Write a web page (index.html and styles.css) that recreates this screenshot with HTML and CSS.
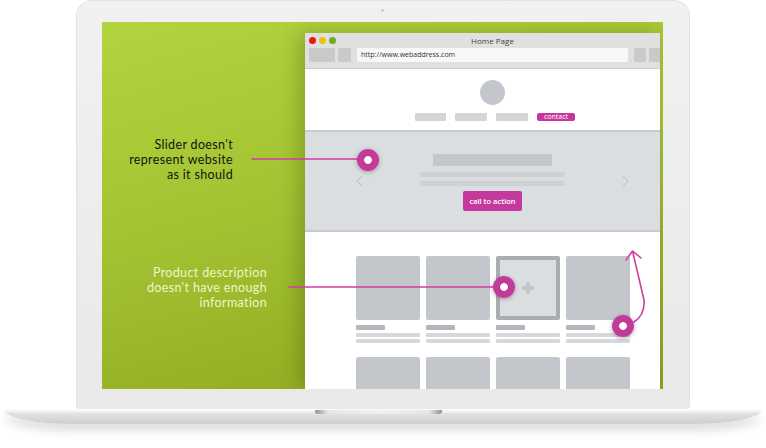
FILE: index.html
```html
<!DOCTYPE html>
<html lang="en">
  <head>
    <meta charset="UTF-8" />
    <meta name="viewport" content="width=device-width, initial-scale=1.0" />
    <title>Website Review</title>
    <link rel="stylesheet" href="styles.css">
  </head>
  <body>
    <div class="laptop">
      <div class="lid">
        <span class="camera"></span>
        <div class="screen">
          <!-- Notes on the left -->
          <div class="notes">
            <p class="note note-dark">Slider doesn't<br>represent website<br>as it should</p>
            <p class="note note-light">Product description<br>doesn't have enough<br>information</p>
          </div>

          <!-- Browser window -->
          <div class="browser">
            <div class="browser-inner">
              <div class="chrome">
                <div class="title-row">
                  <div class="lights">
                    <span class="light red"></span>
                    <span class="light yellow"></span>
                    <span class="light green"></span>
                  </div>
                  <div class="window-title">Home Page</div>
                  <div></div>
                </div>
                <div class="address-row">
                  <span class="btn btn-wide"></span>
                  <span class="btn"></span>
                  <div class="address">http://www.webaddress.com</div>
                  <span class="btn btn-small"></span>
                  <span class="btn btn-small"></span>
                  <span class="btn btn-small"></span>
                </div>
              </div>

              <div class="page">
                <div class="header">
                  <div class="avatar"></div>
                  <div class="nav">
                    <span class="nav-item"></span>
                    <span class="nav-item wide"></span>
                    <span class="nav-item wide"></span>
                    <span class="nav-item contact">contact</span>
                  </div>
                </div>

                <div class="slider">
                  <svg class="chevron" width="7" height="12" viewBox="0 0 7 12"><path d="M6 1 L1 6 L6 11" /></svg>
                  <div class="slide">
                    <span class="slide-title"></span>
                    <span class="slide-line"></span>
                    <span class="slide-line short-gap"></span>
                    <span class="cta">call to action</span>
                  </div>
                  <svg class="chevron" width="7" height="12" viewBox="0 0 7 12"><path d="M1 1 L6 6 L1 11" /></svg>
                </div>

                <div class="products">
                  <div class="product">
                    <div class="thumb"></div>
                    <span class="label"></span>
                    <span class="text-line"></span>
                    <span class="text-line"></span>
                  </div>
                  <div class="product">
                    <div class="thumb"></div>
                    <span class="label"></span>
                    <span class="text-line"></span>
                    <span class="text-line"></span>
                  </div>
                  <div class="product">
                    <div class="thumb thumb-empty">
                      <svg width="14" height="14" viewBox="0 0 14 14"><path d="M7 1 V13 M1 7 H13" /></svg>
                    </div>
                    <span class="label"></span>
                    <span class="text-line"></span>
                    <span class="text-line"></span>
                  </div>
                  <div class="product">
                    <div class="thumb"></div>
                    <span class="label"></span>
                    <span class="text-line"></span>
                    <span class="text-line"></span>
                  </div>
                  <div class="product">
                    <div class="thumb"></div>
                  </div>
                  <div class="product">
                    <div class="thumb"></div>
                  </div>
                  <div class="product">
                    <div class="thumb"></div>
                  </div>
                  <div class="product">
                    <div class="thumb"></div>
                  </div>
                </div>
              </div>
            </div>
          </div>

          <!-- Pointer lines and pins over the screen -->
          <svg class="pointers" width="561" height="367" viewBox="0 0 561 367">
            <path d="M150 137 H266" />
            <path d="M187 265 H402" />
            <path d="M532 300 Q543 293 542 278 L531 231" />
            <path d="M524 238 L530.5 229 L539 236" />
          </svg>
          <span class="pin pin-slider"></span>
          <span class="pin pin-product"></span>
          <span class="pin pin-card"></span>
        </div>
      </div>
      <div class="base">
        <span class="notch"></span>
      </div>
    </div>
  </body>
</html>
```

FILE: styles.css
```css
* {
  box-sizing: border-box;
}
body {
  margin: 0;
  padding: 0;
  background: #fff;
  font-family: "Open Sans", "Liberation Sans", sans-serif;
  width: 766px;
  height: 448px;
  overflow: hidden;
}
.laptop {
  width: 766px;
}

/* Lid */
.lid {
  width: 614px;
  height: 409px;
  margin-left: 76px;
  padding: 8px 26px 19px 25px;
  background: linear-gradient(#f1f1f1, #e9e9e9);
  border: 1px solid #e2e2e2;
  border-bottom: none;
  border-radius: 16px 16px 4px 4px;
  display: flex;
  flex-direction: column;
}
.camera {
  display: block;
  width: 3px;
  height: 3px;
  margin: 0 auto 10px;
  border-radius: 50%;
  background: #cacaca;
}
.screen {
  position: relative;
  width: 561px;
  height: 367px;
  padding: 11px 3px 0 0;
  display: flex;
  align-items: flex-start;
  overflow: hidden;
  background: linear-gradient(165deg, #b2d43f 0%, #a3c232 45%, #8aa51c 100%);
}

/* Notes */
.notes {
  width: 203px;
  flex: none;
  padding-top: 104px;
}
.note {
  margin: 0;
  font-family: Lato, "Open Sans", sans-serif;
  font-size: 12.5px;
  line-height: 15px;
  letter-spacing: 0.35px;
  text-align: right;
}
.note-dark {
  color: #141414;
  margin-right: 72px;
}
.note-light {
  color: #eef6c6;
  margin-top: 83px;
  margin-right: 38px;
}

/* Browser */
.browser {
  width: 355px;
  height: 356px;
  flex: none;
  overflow: hidden;
  box-shadow: -6px 0 18px rgba(50, 60, 0, 0.28);
}
.browser-inner {
  width: 375px;
  height: 100%;
  background: #fff;
}
.chrome {
  background: #e0e0e0;
  padding: 4px 4px 6px;
  border-bottom: 1px solid #cbcbcb;
}
.title-row {
  display: grid;
  grid-template-columns: 1fr auto 1fr;
  align-items: center;
  height: 7px;
  margin-bottom: 4px;
}
.lights {
  display: flex;
  gap: 3px;
}
.light {
  width: 7px;
  height: 7px;
  border-radius: 50%;
}
.red { background: #ef1616; }
.yellow { background: #e6c30c; }
.green { background: #6fae22; }
.window-title {
  font-size: 8px;
  line-height: 7px;
  color: #444;
}
.address-row {
  display: flex;
  height: 14px;
  gap: 3px;
}
.btn {
  width: 13px;
  background: #c9c9c9;
  border-radius: 2px;
}
.btn-wide {
  width: 26px;
}
.btn-small {
  width: 12px;
}
.address {
  flex: 1;
  margin: 0 3px;
  background: #f8f8f8;
  border-radius: 2px;
  font-size: 7px;
  line-height: 14px;
  padding-left: 4px;
  color: #333;
}

/* Page */
.header {
  display: flex;
  flex-direction: column;
  align-items: center;
  padding: 11px 0 9px;
}
.avatar {
  width: 25px;
  height: 25px;
  border-radius: 50%;
  background: #c3c7cb;
}
.nav {
  display: flex;
  gap: 9px;
  margin: 8px 0 0 5px;
}
.nav-item {
  width: 31px;
  height: 8px;
  background: #d3d6d9;
  border-radius: 1px;
}
.nav-item.wide {
  width: 32px;
}
.nav-item.contact {
  width: 38px;
  background: #c4399b;
  color: #fff;
  font-size: 7px;
  line-height: 8px;
  text-align: center;
  border-radius: 2px;
}

.slider {
  display: flex;
  justify-content: space-between;
  align-items: center;
  height: 102px;
  padding: 0 51px;
  background: #dadee1;
  border-top: 2px solid #c7cbcf;
  border-bottom: 2px solid #c7cbcf;
}
.chevron path {
  fill: none;
  stroke: #b8bcc0;
  stroke-width: 1;
}
.slide {
  display: flex;
  flex-direction: column;
  align-items: center;
  padding-top: 3px;
}
.slide-title {
  width: 119px;
  height: 12px;
  background: #c3c7cb;
  border-radius: 2px;
}
.slide-line {
  width: 145px;
  height: 5px;
  margin-top: 6px;
  background: #cdd1d4;
  border-radius: 2px;
}
.slide-line.short-gap {
  margin-top: 4px;
}
.cta {
  margin-top: 5px;
  width: 59px;
  height: 20px;
  background: #c4399b;
  color: #fff;
  font-size: 7.5px;
  font-weight: 600;
  line-height: 20px;
  text-align: center;
  border-radius: 2px;
}

.products {
  display: grid;
  grid-template-columns: repeat(4, 64px);
  column-gap: 6px;
  row-gap: 14px;
  justify-content: center;
  padding-top: 24px;
}
.product {
  display: flex;
  flex-direction: column;
}
.thumb {
  width: 64px;
  height: 64px;
  background: #c3c7cb;
  border-radius: 2px;
}
.thumb-empty {
  display: flex;
  align-items: center;
  justify-content: center;
  background: #dadee1;
  border: 4px solid #a9adb2;
}
.thumb-empty path {
  stroke: #bfc3c7;
  stroke-width: 3;
}
.label {
  width: 29px;
  height: 5px;
  margin-top: 5px;
  background: #b3b7bb;
  border-radius: 1px;
}
.text-line {
  height: 4px;
  margin-top: 3px;
  background: #d6d9dc;
  border-radius: 1px;
}
.text-line + .text-line {
  margin-top: 2px;
}

/* Pointers */
.pointers {
  position: absolute;
  left: 0;
  top: 0;
  pointer-events: none;
}
.pointers path {
  fill: none;
  stroke: #d03fa3;
  stroke-width: 1.6;
  stroke-linecap: round;
  stroke-linejoin: round;
}
.pin {
  position: absolute;
  width: 22px;
  height: 22px;
  margin: -11px 0 0 -11px;
  border-radius: 50%;
  background: radial-gradient(circle, #fff 0 3.5px, #c13c99 4.2px);
  box-shadow: 0 1px 4px rgba(60, 0, 40, 0.35);
}
.pin-slider {
  left: 266px;
  top: 138px;
}
.pin-product {
  left: 402px;
  top: 265px;
}
.pin-card {
  left: 521px;
  top: 304px;
}

/* Base */
.base {
  width: 758px;
  height: 14px;
  margin-left: 4px;
  background: linear-gradient(#f6f6f6 0, #f2f2f2 2px, #e3e3e3 3px, #cdcdcd 100%);
  border-radius: 0 0 70px 70px / 0 0 14px 14px;
  box-shadow: 0 7px 10px rgba(0, 0, 0, 0.13);
}
.notch {
  display: block;
  width: 127px;
  height: 4px;
  margin-left: 311px;
  margin-top: 1px;
  border-radius: 0 0 3px 3px;
  background: linear-gradient(90deg, #8f8f8f, #e6e6e6 10%, #f1f1f1 50%, #e6e6e6 90%, #8f8f8f);
}
```
